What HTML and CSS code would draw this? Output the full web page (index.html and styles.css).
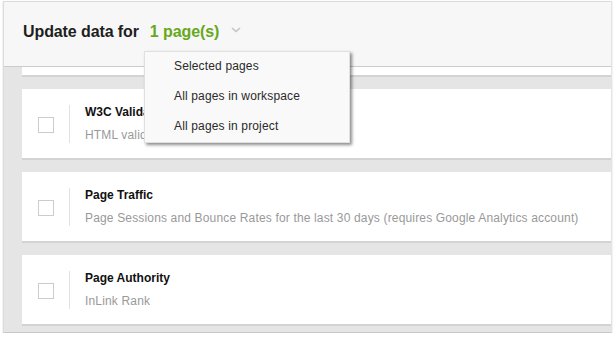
FILE: index.html
```html
<!DOCTYPE html>
<html lang="en">
<head>
    <meta charset="UTF-8">
    <title>Update data</title>
    <link rel="stylesheet" href="styles.css">
</head>
<body>
    <div class="panel">
        <div class="header">
            <span class="header-title">Update data for</span>
            <span class="header-count">1 page(s)</span>
            <svg class="chevron" width="10" height="6" viewBox="0 0 10 6">
                <polyline points="1,1 5,4.5 9,1" fill="none" stroke="#c4c4c4" stroke-width="1.6"/>
            </svg>
        </div>

        <div class="list">
            <div class="card card-partial"></div>

            <div class="card">
                <span class="check"></span>
                <span class="divider"></span>
                <div class="info">
                    <div class="info-title">W3C Validation</div>
                    <div class="info-desc">HTML validation</div>
                </div>
            </div>

            <div class="card">
                <span class="check"></span>
                <span class="divider"></span>
                <div class="info">
                    <div class="info-title">Page Traffic</div>
                    <div class="info-desc">Page Sessions and Bounce Rates for the last 30 days (requires Google Analytics account)</div>
                </div>
            </div>

            <div class="card">
                <span class="check"></span>
                <span class="divider"></span>
                <div class="info">
                    <div class="info-title">Page Authority</div>
                    <div class="info-desc">InLink Rank</div>
                </div>
            </div>
        </div>

        <!-- menu opened from "1 page(s)" -->
        <ul class="menu">
            <li>Selected pages</li>
            <li>All pages in workspace</li>
            <li>All pages in project</li>
        </ul>
    </div>
</body>
</html>
```

FILE: styles.css
```css
body {
    margin: 0;
    background-color: #ffffff;
    font-family: 'Liberation Sans', Arial, sans-serif;
}

.panel {
    position: relative;
    margin: 1px 0 0 3px;
    width: 607px;
    border: 1px solid #dcdcdc;
    border-right-color: #e4e4e4;
    border-bottom-color: #c8c8c8;
    box-shadow: 0 1px 2px rgba(0, 0, 0, 0.15);
}

.header {
    display: flex;
    align-items: flex-start;
    height: 44px;
    padding: 20px 0 0 19px;
    background-color: #f7f7f7;
    border-bottom: 1px solid #cccccc;
    font-size: 16px;
    line-height: 20px;
    font-weight: bold;
    letter-spacing: -0.1px;
}

.header-title {
    color: #1e1e1e;
}

.header-count {
    margin-left: 11px;
    color: #67a820;
}

.chevron {
    margin: 5px 0 0 12px;
}

.list {
    height: 259px;
    padding: 0 0 6px 18px;
    background-color: #e5e5e5;
}

.card {
    display: flex;
    align-items: flex-start;
    height: 53px;
    padding: 16px 0 0 16px;
    margin-bottom: 12px;
    background-color: #ffffff;
    border-bottom: 2px solid #d3d3d3;
}

.card:last-child {
    margin-bottom: 0;
}

.card-partial {
    height: 8px;
    padding: 0;
}

.check {
    width: 14px;
    height: 14px;
    margin: 12px 15px 0 0;
    border: 1px solid #cccccc;
    background-color: #ffffff;
}

.divider {
    width: 1px;
    height: 38px;
    margin-right: 15px;
    background-color: #e2e2e2;
}

.info {
    font-size: 12px;
    line-height: 14px;
}

.info-title {
    font-weight: bold;
    color: #111111;
}

.info-desc {
    margin-top: 9px;
    color: #999999;
    letter-spacing: 0.16px;
}

.menu {
    position: absolute;
    left: 140px;
    top: 49px;
    width: 204px;
    margin: 0;
    padding: 0;
    list-style: none;
    background-color: #f9f9f9;
    border: 1px solid #e0e0e0;
    box-shadow: 2px 2px 3px rgba(0, 0, 0, 0.45);
}

.menu li {
    height: 30px;
    padding-left: 29px;
    font-size: 12px;
    line-height: 28px;
    color: #2a2a2a;
    letter-spacing: 0.15px;
}
```
